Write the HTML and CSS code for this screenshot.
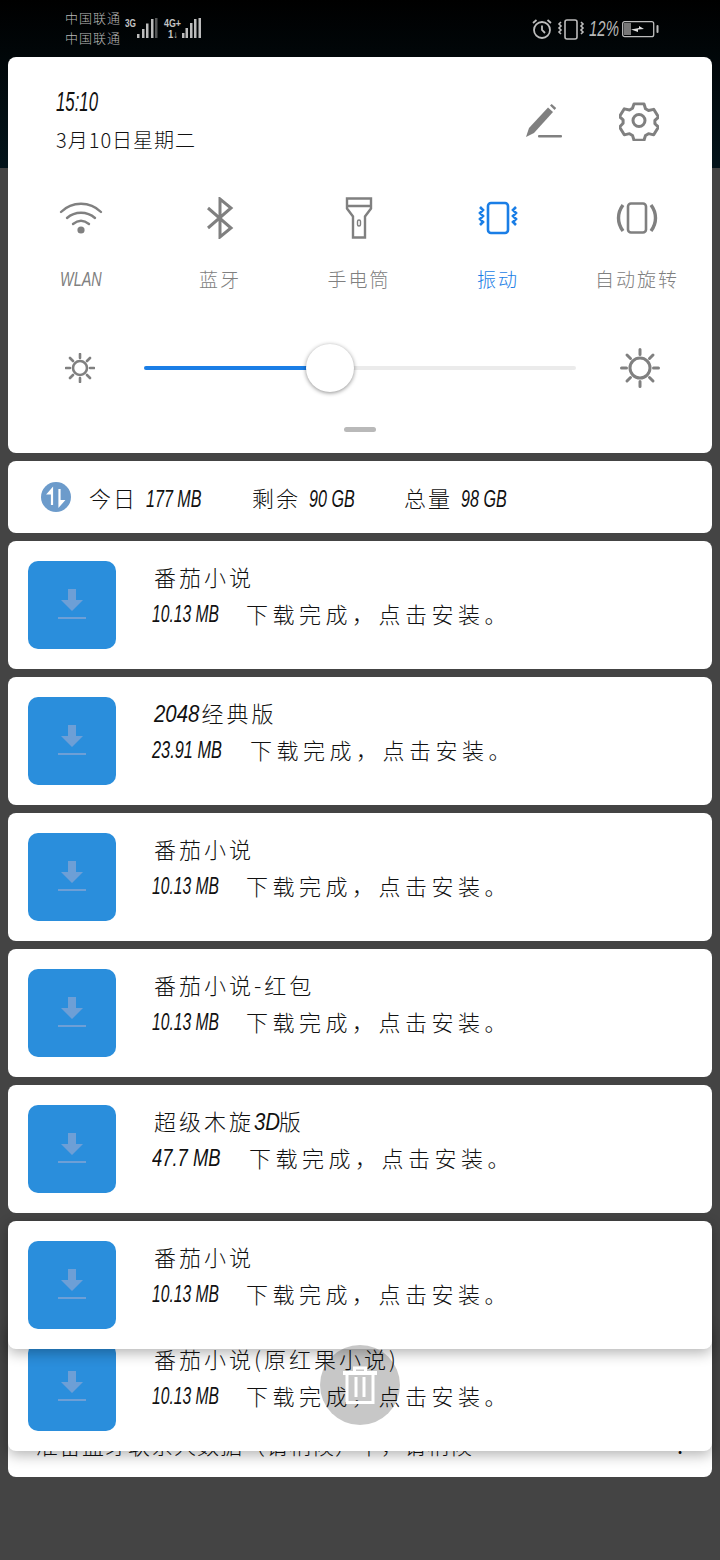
FILE: index.html
```html
<!DOCTYPE html>
<html lang="zh">
<head>
<meta charset="utf-8">
<title>通知中心</title>
<link rel="stylesheet" href="styles.css">
</head>
<body>
<header class="status">
  <div class="carriers"><span>中国联通</span><span>中国联通</span></div>
  <div class="signal">
    <svg width="80" height="24" viewBox="124 17 80 24"><g fill="#bcbcbc"><text x="125" y="27" class="net" textLength="11" lengthAdjust="spacingAndGlyphs">3G</text><text x="164" y="27" class="net" textLength="17" lengthAdjust="spacingAndGlyphs">4G+</text><rect x="137" y="34" width="2.500" height="4"/><rect x="142" y="29" width="2.500" height="9"/><rect x="146" y="23.500" width="2.500" height="14.500"/><rect x="151" y="19" width="2.500" height="19"/><rect x="155" y="18" width="2.500" height="20" opacity=".45"/><text x="168" y="38" class="net" textLength="10" lengthAdjust="spacingAndGlyphs">1↓</text><rect x="182" y="33" width="2.500" height="5"/><rect x="185.500" y="28" width="2.500" height="10"/><rect x="190" y="23" width="2.500" height="15"/><rect x="194" y="19" width="2.500" height="19"/><rect x="198.500" y="18" width="2.500" height="20"/></g></svg>
  </div>
  <div class="status-right">
    <svg width="22" height="22" viewBox="0 0 22 22" fill="none" stroke="#bdbdbd" stroke-width="1.800"><circle cx="11" cy="12" r="8"/><path d="M11 7.500V12l3 3M2 5l3.500-3M20 5l-3.500-3"/></svg>
    <svg width="28" height="22" viewBox="0 0 28 22" fill="none" stroke="#bdbdbd" stroke-width="1.600"><rect x="8" y="2" width="12" height="19" rx="2"/><path d="M4 4L2 6l2 2-2 2 2 2-2 2 2 2M24 4l2 2-2 2 2 2-2 2 2 2-2 2"/></svg>
    <i class="pct">12%</i>
    <svg width="38" height="20" viewBox="0 0 38 20"><rect x=".7" y="2.700" width="31" height="15" rx="2" fill="none" stroke="#bdbdbd" stroke-width="1.300"/><rect x="2" y="4" width="7" height="12" fill="#777"/><path d="M9 10.500l8-1.500V7l5 3-6 .5V13z" fill="#ddd"/><rect x="34.500" y="6" width="2" height="8" rx="1" fill="#bdbdbd"/></svg>
  </div>
</header>

<section class="panel">
  <div class="panel-head">
    <div class="clock">
      <i class="time">15:10</i>
      <div class="date">3月10日星期二</div>
    </div>
    <div class="head-actions">
      <svg width="38" height="38" viewBox="0 -2 38 38" fill="#808080"><path d="M1 33l3-9L23 3.500l5 4.500L9 29z"/><path d="M25 1.500L26.700 0l4.500 4L29.500 6z"/><rect x="13" y="31" width="24" height="2.600" rx="1"/></svg>
      <svg width="40" height="40" viewBox="0 0 40 40" fill="none" stroke="#808080" stroke-width="3" stroke-linejoin="round"><path d="M15 3.500h10l1.500 5 3 1.800 5.200-1.200 4.800 8-3.600 3.400v3.500l3.600 3.400-4.800 8-5.200-1.200-3 1.800-1.500 5H15l-1.500-5-3-1.800-5.200 1.200-4.800-8L4.100 23.500V20L.5 16.600l4.800-8 5.200 1.200 3-1.800z" transform="translate(0 -.5) scale(1 .97)"/><circle cx="20" cy="19.500" r="6"/></svg>
    </div>
  </div>

  <div class="toggles">
    <div class="toggle">
      <svg width="44" height="36" viewBox="0 0 44 36" fill="none" stroke="#808080" stroke-width="2.400" stroke-linecap="round"><path d="M2 12C13 1 31 1 42 12M8 18c8-7 20-7 28 0M14 24c5-4 11-4 16 0"/><circle cx="22" cy="30" r="3.600" fill="#808080" stroke="none"/></svg>
      <i class="label latin">WLAN</i>
    </div>
    <div class="toggle">
      <svg width="28" height="40" viewBox="0 0 28 40" fill="none" stroke="#808080" stroke-width="3"><path d="M2 10l23 20-11 9V1l11 9L2 30"/></svg>
      <span class="label">蓝牙</span>
    </div>
    <div class="toggle">
      <svg width="28" height="42" viewBox="0 0 28 42" fill="none" stroke="#808080" stroke-width="2.400"><path d="M2 1.500h24v10l-6 8v21H8v-21l-6-8zM2 9h24"/><rect x="12.500" y="23" width="3" height="6" rx="1.500" stroke-width="1.400"/></svg>
      <span class="label">手电筒</span>
    </div>
    <div class="toggle active">
      <svg width="42" height="34" viewBox="0 0 42 34" fill="none" stroke="#1a7ee6" stroke-width="2.600"><rect x="11" y="2" width="20" height="30" rx="3"/><path d="M3 6l3 3-3 3 3 3-3 3 3 3-3 3M39 6l-3 3 3 3-3 3 3 3-3 3 3 3"/></svg>
      <span class="label">振动</span>
    </div>
    <div class="toggle">
      <svg width="42" height="32" viewBox="0 0 42 32" fill="none" stroke="#808080"><rect x="12" y="1.500" width="18" height="29" rx="3" stroke-width="2.600"/><path d="M7 3C1 11 1 21 7 29M35 3c6 8 6 18 0 26" stroke-width="3.400"/></svg>
      <span class="label">自动旋转</span>
    </div>
  </div>

  <div class="brightness">
    <svg class="sun-s" width="30" height="30" viewBox="0 0 30 30" fill="none" stroke="#808080" stroke-width="2.600" stroke-linecap="round"><circle cx="15" cy="15" r="7"/><path d="M15 1v4M15 25v4M1 15h4M25 15h4M5 5l3 3M22 22l3 3M5 25l3-3M22 8l3-3"/></svg>
    <div class="track">
      <div class="track-fill"></div>
      <div class="thumb"></div>
    </div>
    <svg class="sun-l" width="40" height="40" viewBox="0 0 40 40" fill="none" stroke="#808080" stroke-width="3" stroke-linecap="round"><circle cx="20" cy="20" r="10"/><path d="M20 1.500v5M20 33.500v5M1.500 20h5M33.500 20h5M7 7l3.500 3.500M29.500 29.500L33 33M7 33l3.500-3.500M29.500 10.500L33 7"/></svg>
  </div>
  <div class="handle"></div>
</section>

<section class="data-card">
  <svg width="30" height="30" viewBox="0 0 30 30"><circle cx="15" cy="15" r="15" fill="#6c9bcb"/><path d="M11 8v15M7.500 11.500L11 7.500v4zM18.500 7v15.500M18.500 19v4l3.500-4z" stroke="#fff" stroke-width="2.200" fill="#fff"/></svg>
  <span class="data-item first">今日 <i>177 MB</i></span>
  <span class="data-item">剩余 <i>90 GB</i></span>
  <span class="data-item">总量 <i>98 GB</i></span>
</section>

<main class="list">
  <article class="card">
    <div class="app"><svg width="32" height="32" viewBox="0 0 32 32"><path d="M12 0h8v11h7L16 22 5 11h7z" fill="#6d9fd6"/><rect x="2" y="28" width="28" height="2" fill="#6d9fd6"/></svg></div>
    <div class="info"><h2>番茄小说</h2><p><i>10.13 MB</i><span>下载完成，点击安装。</span></p></div>
  </article>
  <article class="card">
    <div class="app"><svg width="32" height="32" viewBox="0 0 32 32"><path d="M12 0h8v11h7L16 22 5 11h7z" fill="#6d9fd6"/><rect x="2" y="28" width="28" height="2" fill="#6d9fd6"/></svg></div>
    <div class="info"><h2><i>2048</i>经典版</h2><p><i class="wide">23.91 MB</i><span>下载完成，点击安装。</span></p></div>
  </article>
  <article class="card">
    <div class="app"><svg width="32" height="32" viewBox="0 0 32 32"><path d="M12 0h8v11h7L16 22 5 11h7z" fill="#6d9fd6"/><rect x="2" y="28" width="28" height="2" fill="#6d9fd6"/></svg></div>
    <div class="info"><h2>番茄小说</h2><p><i>10.13 MB</i><span>下载完成，点击安装。</span></p></div>
  </article>
  <article class="card">
    <div class="app"><svg width="32" height="32" viewBox="0 0 32 32"><path d="M12 0h8v11h7L16 22 5 11h7z" fill="#6d9fd6"/><rect x="2" y="28" width="28" height="2" fill="#6d9fd6"/></svg></div>
    <div class="info"><h2>番茄小说-红包</h2><p><i>10.13 MB</i><span>下载完成，点击安装。</span></p></div>
  </article>
  <article class="card">
    <div class="app"><svg width="32" height="32" viewBox="0 0 32 32"><path d="M12 0h8v11h7L16 22 5 11h7z" fill="#6d9fd6"/><rect x="2" y="28" width="28" height="2" fill="#6d9fd6"/></svg></div>
    <div class="info"><h2>超级木旋<i>3D</i>版</h2><p><i class="wider">47.7 MB</i><span>下载完成，点击安装。</span></p></div>
  </article>
  <article class="card lift-top">
    <div class="app"><svg width="32" height="32" viewBox="0 0 32 32"><path d="M12 0h8v11h7L16 22 5 11h7z" fill="#6d9fd6"/><rect x="2" y="28" width="28" height="2" fill="#6d9fd6"/></svg></div>
    <div class="info"><h2>番茄小说</h2><p><i>10.13 MB</i><span>下载完成，点击安装。</span></p></div>
  </article>
  <article class="card lift-mid">
    <div class="app"><svg width="32" height="32" viewBox="0 0 32 32"><path d="M12 0h8v11h7L16 22 5 11h7z" fill="#6d9fd6"/><rect x="2" y="28" width="28" height="2" fill="#6d9fd6"/></svg></div>
    <div class="info"><h2>番茄小说(原红果小说)</h2><p><i>10.13 MB</i><span>下载完成，点击安装。</span></p></div>
  </article>
  <article class="card lift-bottom">
    <p class="hidden-line"><span>准备蓝牙联系人数据（请稍候）中，请稍候</span><b>.</b></p>
  </article>
  <div class="trash">
    <svg width="36" height="38" viewBox="0 0 36 38" fill="none" stroke="#fff"><path d="M1 7h34" stroke-width="4"/><path d="M12.500 6V2h11v4" stroke-width="3"/><path d="M5 9v27.500h26V9" stroke-width="3"/><path d="M14 11v20M22 11v20" stroke-width="3"/></svg>
  </div>
</main>
</body>
</html>
```

FILE: styles.css
```css
* { box-sizing: border-box; }
html, body { margin: 0; padding: 0; }
body {
  width: 720px;
  height: 1560px;
  overflow: hidden;
  font-family: "Noto Sans CJK SC", "Noto Sans", sans-serif;
  font-weight: 300;
  color: #111;
  background: linear-gradient(#000 0, #03141b 168px, #444 168px) no-repeat;
  background-color: #444;
}
i {
  display: inline-block;
  font-family: "Liberation Sans", sans-serif;
  font-style: italic;
  font-weight: 400;
  transform: scaleX(.68);
  transform-origin: left center;
  white-space: nowrap;
}

.status {
  height: 57px;
  display: flex;
  align-items: center;
  padding: 0 60px 0 65px;
  color: #b8b8b8;
}
.carriers { display: flex; flex-direction: column; font-size: 13px; line-height: 20px; letter-spacing: 1px; margin-top: -1px; width: 59px; }
.signal { height: 24px; }
.net { font: 700 10px "Liberation Sans", sans-serif; fill: #c4c4c4; }
.status-right { margin-left: auto; display: flex; align-items: center; gap: 4px; }
.pct { font-size: 22px; color: #b8b8b8; width: 29px; }

.panel, .data-card, .card { background: #fff; border-radius: 8px; margin: 0 8px; }
.panel { height: 396px; position: relative; }
.panel-head { display: flex; justify-content: space-between; padding: 27px 53px 0 48px; height: 127px; }
.time { display: block; font-size: 28px; line-height: 36px; transform: scaleX(.6); }
.date { font-size: 20px; line-height: 28px; margin-top: 6px; letter-spacing: 1px; }
.head-actions { display: flex; gap: 56px; align-items: center; height: 74px; }

.toggles { display: grid; grid-template-columns: repeat(5, 139px); padding-left: 3.500px; height: 126px; margin-top: 9px; }
.toggle { display: flex; flex-direction: column; align-items: center; color: #808080; height: 116px; }
.toggle svg { height: 42px; margin-top: 4px; }
.toggle .label { font-size: 19px; line-height: 26px; margin-top: 27px; letter-spacing: 2px; white-space: nowrap; }
.toggle .latin { font-size: 20px; letter-spacing: 0; transform: scaleX(.72); transform-origin: center; }
.toggle.active { color: #1a7ee6; }

.brightness { display: flex; align-items: center; height: 48px; position: relative; margin-top: 25px; }
.sun-s { margin-left: 57px; }
.track { margin-left: 49px; width: 432px; height: 4px; border-radius: 2px; background: #ebebeb; position: relative; }
.track-fill { width: 186px; height: 100%; background: #1a7ee6; border-radius: 2px; }
.thumb { position: absolute; left: 162px; top: -22px; width: 48px; height: 48px; border-radius: 50%; background: #fff; box-shadow: 0 1px 4px rgba(0,0,0,.45); }
.sun-l { margin-left: 44px; }
.handle { width: 32px; height: 5px; border-radius: 2.500px; background: #b9b9b9; margin: 35px auto 0; }

.data-card { height: 72px; margin-top: 8px; display: flex; align-items: center; padding-left: 33px; font-size: 22px; }
.data-item { white-space: nowrap; letter-spacing: 2px; width: 152px; }
.data-item i { font-size: 23px; letter-spacing: 0; margin-left: 2px; transform: scaleX(.7); }
.data-item.first { margin-left: 18px; width: 163px; }

.list { margin-top: 8px; display: flex; flex-direction: column; gap: 8px; position: relative; }
.card { height: 128px; flex: none; display: flex; align-items: center; padding-left: 20px; position: relative; }
.app { width: 88px; height: 88px; border-radius: 10px; background: #2a8edc; display: flex; align-items: center; justify-content: center; flex: none; }
.info { margin-left: 36px; padding-bottom: 20px; }
.info h2 { margin: 0; font-size: 22px; font-weight: 300; line-height: 32px; letter-spacing: 3px; padding-left: 2px; white-space: nowrap; }
.info h2 i { font-size: 24px; line-height: 28px; letter-spacing: 0; transform: scaleX(.85); margin-right: -6px; }
.info p { margin: 4px 0 0; font-size: 22px; line-height: 32px; white-space: nowrap; letter-spacing: 4.500px; display: flex; align-items: center; }
.info p i { font-size: 23px; letter-spacing: 0; width: 94px; margin-top: 2px; }
.info p i.wide { width: 98px; transform: scaleX(.71); }
.info p i.wider { width: 97px; transform: scaleX(.8); }

.lift-top { z-index: 3; box-shadow: 0 4px 14px rgba(0,0,0,.3); }
.lift-mid { z-index: 2; margin-top: -34px; box-shadow: 0 4px 14px rgba(0,0,0,.3); }
.lift-bottom { z-index: 1; margin-top: -110px; align-items: flex-start; padding: 81px 28px 0; }
.hidden-line { margin: 0; width: 100%; font-size: 22px; line-height: 28px; letter-spacing: 1px; display: flex; justify-content: space-between; white-space: nowrap; }

.trash {
  position: absolute;
  left: 320px;
  top: 804px;
  z-index: 5;
  width: 80px;
  height: 80px;
  border-radius: 50%;
  background: rgba(0,0,0,.22);
  display: flex;
  align-items: center;
  justify-content: center;
}
```
